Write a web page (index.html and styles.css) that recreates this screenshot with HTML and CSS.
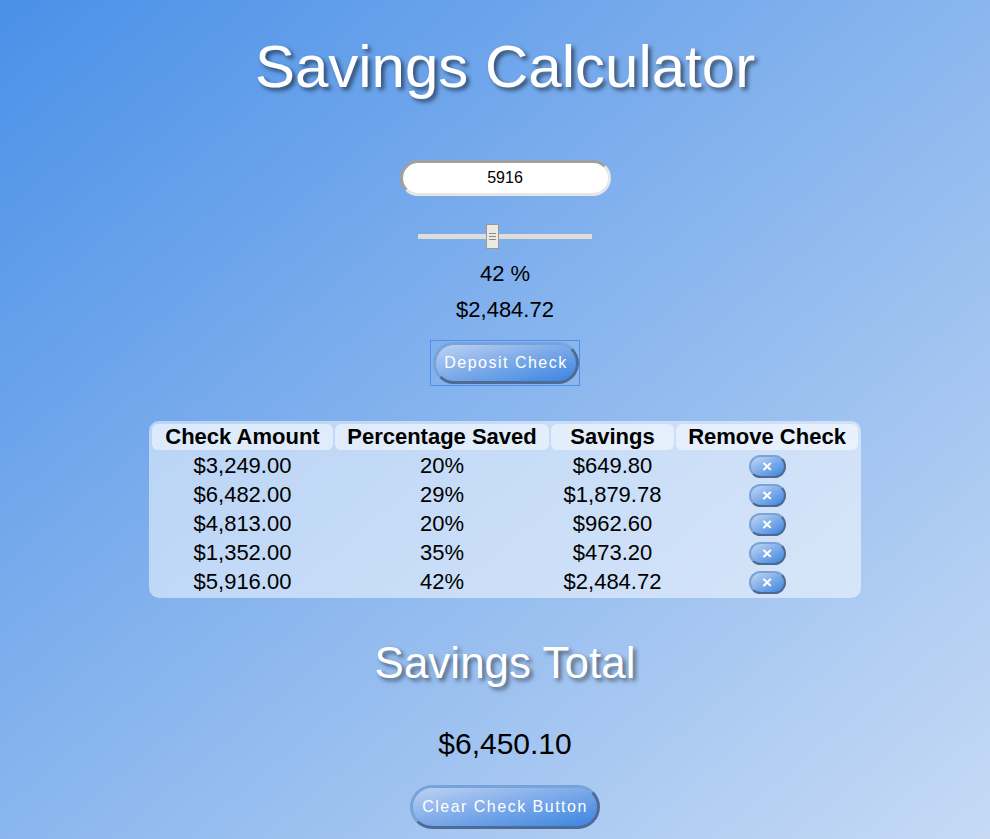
FILE: index.html
```html
<!DOCTYPE html>
<html lang="en">
<head>
<meta charset="utf-8">
<title>Savings Calculator</title>
<link rel="stylesheet" href="styles.css">
</head>
<body>
<main class="page">
  <h1 class="title">Savings Calculator</h1>
  <input class="amount-input" type="text" value="5916">
  <input class="slider" type="range" min="0" max="100" value="42">
  <div class="percent">42 %</div>
  <div class="calc">$2,484.72</div>
  <span class="focus-ring"><button class="btn btn-deposit">Deposit Check</button></span>

  <table class="checks">
    <colgroup>
      <col class="c1"><col class="c2"><col class="c3"><col class="c4">
    </colgroup>
    <thead>
      <tr><th>Check Amount</th><th>Percentage Saved</th><th>Savings</th><th>Remove Check</th></tr>
    </thead>
    <tbody>
      <tr><td>$3,249.00</td><td>20%</td><td>$649.80</td><td><button class="remove">×</button></td></tr>
      <tr><td>$6,482.00</td><td>29%</td><td>$1,879.78</td><td><button class="remove">×</button></td></tr>
      <tr><td>$4,813.00</td><td>20%</td><td>$962.60</td><td><button class="remove">×</button></td></tr>
      <tr><td>$1,352.00</td><td>35%</td><td>$473.20</td><td><button class="remove">×</button></td></tr>
      <tr><td>$5,916.00</td><td>42%</td><td>$2,484.72</td><td><button class="remove">×</button></td></tr>
    </tbody>
  </table>

  <h2 class="subtitle">Savings Total</h2>
  <div class="total">$6,450.10</div>
  <button class="btn btn-clear">Clear Check Button</button>
</main>
</body>
</html>
```

FILE: styles.css
```css
html, body {
  margin: 0;
  padding: 0;
  height: 100%;
}
body {
  font-family: "Liberation Sans", Arial, sans-serif;
  background: linear-gradient(to bottom right, #4a90e8 0%, #8ab6ee 50%, #c6daf5 100%);
  background-attachment: fixed;
  color: #000;
  overflow: hidden;
}
.page {
  display: flex;
  flex-direction: column;
  align-items: center;
  padding-left: 20px;
}
.title {
  margin: 32px 0 0;
  font-size: 60px;
  line-height: 70px;
  font-weight: normal;
  color: #fff;
  text-shadow: 3px 3px 4px rgba(0, 0, 0, 0.55);
}
.amount-input {
  box-sizing: border-box;
  margin-top: 58px;
  width: 211px;
  height: 36px;
  border-radius: 18px;
  border: 3px solid;
  border-color: #a0a0a0 #e6e6e6 #e6e6e6 #a0a0a0;
  background: #fff;
  font-family: "Liberation Sans", Arial, sans-serif;
  font-size: 16px;
  text-align: center;
  color: #000;
  outline: none;
  padding: 0;
}
.slider {
  -webkit-appearance: none;
  appearance: none;
  margin: 28px 0 0;
  width: 174px;
  height: 25px;
  background: transparent;
}
.slider::-webkit-slider-runnable-track {
  height: 5px;
  background: #e0dcd8;
}
.slider::-webkit-slider-thumb {
  -webkit-appearance: none;
  box-sizing: border-box;
  width: 13px;
  height: 25px;
  margin-top: -10px;
  border: 1px solid #9a9794;
  background-color: #ece9e5;
  background-image: linear-gradient(#8a8a8a, #8a8a8a), linear-gradient(#8a8a8a, #8a8a8a), linear-gradient(#8a8a8a, #8a8a8a);
  background-size: 7px 1px;
  background-repeat: no-repeat;
  background-position: 2px 8px, 2px 11px, 2px 14px;
}
.percent {
  margin-top: 12px;
  font-size: 22px;
  line-height: 26px;
}
.calc {
  margin-top: 10px;
  font-size: 22px;
  line-height: 26px;
}
.focus-ring {
  display: inline-flex;
  margin-top: 17px;
  padding: 1px 0 1px 2px;
  border: 1px solid #4f8ff2;
}
.btn {
  font-family: "Liberation Sans", Arial, sans-serif;
  font-size: 16px;
  line-height: 18px;
  letter-spacing: 1.5px;
  color: #fff;
  border: 3px solid;
  border-color: #78a2da #4f6b94 #4f6b94 #78a2da;
  border-radius: 22px;
  background: linear-gradient(to bottom right, #bcd3f2 0%, #82adea 45%, #3a85e0 100%);
  cursor: pointer;
}
.btn-deposit {
  padding: 9px 8px;
}
.btn-clear {
  margin-top: 23px;
  padding: 10px 9px;
}
.checks {
  margin-top: 35px;
  table-layout: fixed;
  border-collapse: separate;
  border-spacing: 2px;
  border: 1px solid transparent;
  background: rgba(255, 255, 255, 0.5);
  border-radius: 10px;
}
.c1 { width: 181px; }
.c2 { width: 214px; }
.c3 { width: 123px; }
.c4 { width: 182px; }
.checks th {
  height: 26px;
  padding: 0;
  font-size: 22px;
  line-height: 26px;
  font-weight: bold;
  background: rgba(255, 255, 255, 0.5);
  border-radius: 6px;
}
.checks td {
  height: 27px;
  padding: 0;
  font-size: 22px;
  line-height: 26px;
  text-align: center;
}
.remove {
  box-sizing: border-box;
  width: 37px;
  height: 23px;
  padding: 0;
  border: 2px solid;
  border-color: #7aa2d8 #4d6990 #4d6990 #7aa2d8;
  border-radius: 12px;
  background: linear-gradient(to bottom right, #c4d9f4 0%, #86b0ea 45%, #3b85df 100%);
  color: #fff;
  font-family: "Liberation Sans", Arial, sans-serif;
  font-size: 17px;
  font-weight: bold;
  line-height: 18px;
  vertical-align: middle;
}
.subtitle {
  margin: 40px 0 0;
  font-size: 44px;
  line-height: 50px;
  font-weight: normal;
  color: #fff;
  text-shadow: 3px 3px 4px rgba(0, 0, 0, 0.5);
}
.total {
  margin-top: 38px;
  font-size: 30px;
  line-height: 36px;
}
```
